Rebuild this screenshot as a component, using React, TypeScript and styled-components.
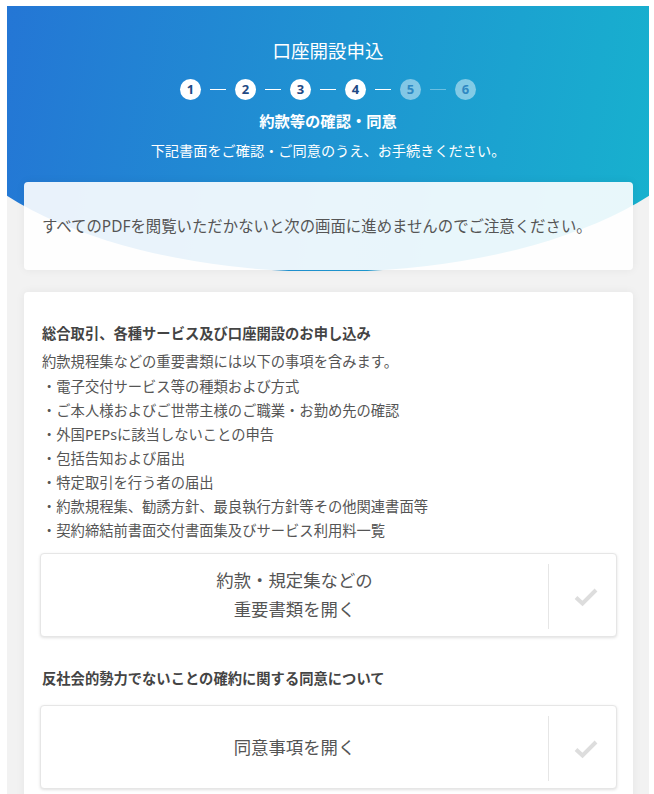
import React from 'react';
import styled, { createGlobalStyle } from 'styled-components';

const GlobalStyle = createGlobalStyle`
  html, body {
    margin: 0;
    padding: 0;
    background: #ffffff;
  }
  body {
    font-family: 'Noto Sans', 'Noto Sans CJK JP', sans-serif;
    -webkit-font-smoothing: antialiased;
  }
`;

const Page = styled.div`
  margin: 6px 0 0 7px;
  width: 642px;
  min-height: 788px;
  background: #f2f2f2;
  overflow: hidden;
`;

const Hero = styled.header`
  padding: 32px 0 110px;
  background: linear-gradient(100deg, #2476d5 0%, #1f94d2 50%, #17b2ce 100%);
  clip-path: ellipse(400px 189px at 50% 77px);
  color: #ffffff;
  text-align: center;
`;

const Title = styled.h1`
  margin: 0;
  font-size: 18.5px;
  line-height: 26px;
  font-weight: 400;
`;

const Steps = styled.ol`
  display: flex;
  justify-content: center;
  align-items: center;
  margin: 15px 0 0;
  padding: 0;
  list-style: none;
`;

const Step = styled.li<{ $done: boolean }>`
  display: flex;
  align-items: center;
  justify-content: center;
  width: 21px;
  height: 21px;
  border-radius: 50%;
  background: ${(p) => (p.$done ? '#ffffff' : 'rgba(255, 255, 255, 0.45)')};
  color: ${(p) => (p.$done ? '#1f4a85' : '#2f88c2')};
  font-size: 13px;
  font-weight: 700;
  line-height: 1;
`;

const Connector = styled.li<{ $faint: boolean }>`
  width: 16px;
  height: 1.5px;
  margin: 0 9px;
  background: ${(p) => (p.$faint ? 'rgba(255, 255, 255, 0.35)' : '#ffffff')};
`;

const StepName = styled.h2`
  margin: 10px 0 0;
  font-size: 15.3px;
  line-height: 22px;
  font-weight: 700;
`;

const Lead = styled.p`
  margin: 9px 0 0;
  font-size: 14.2px;
  line-height: 20px;
`;

const Body = styled.main`
  padding: 0 16px 0 17px;
`;

const Notice = styled.div`
  position: relative;
  z-index: 1;
  display: flex;
  align-items: center;
  height: 88px;
  margin-top: -89px;
  padding: 2px 18px 0;
  box-sizing: border-box;
  background: rgba(255, 255, 255, 0.9);
  border-radius: 4px;
  box-shadow: 0 0 10px rgba(0, 0, 0, 0.06);
  color: #555555;
  font-size: 15.4px;
  line-height: 22px;
`;

const Card = styled.section`
  margin-top: 22px;
  padding: 32px 16px 20px;
  background: #ffffff;
  border-radius: 4px;
  box-shadow: 0 0 10px rgba(0, 0, 0, 0.06);
`;

const Heading = styled.h3<{ $gap?: number }>`
  margin: ${(p) => p.$gap ?? 0}px 0 0;
  padding: 0 2px;
  color: #444444;
  font-size: 14.3px;
  line-height: 20px;
  font-weight: 700;
`;

const Text = styled.p`
  margin: 6px 0 0;
  padding: 0 2px;
  color: #555555;
  font-size: 14.3px;
  line-height: 24px;
`;

const List = styled.ul`
  margin: 1px 0 0;
  padding: 0 2px;
  list-style: none;
  color: #555555;
  font-size: 14.3px;
  line-height: 24px;
`;

const OpenButton = styled.button<{ $gap: number }>`
  display: flex;
  width: 100%;
  height: 84px;
  margin-top: ${(p) => p.$gap}px;
  padding: 0;
  background: #ffffff;
  border: 1px solid #e6e6e6;
  border-radius: 4px;
  box-shadow: 0 1px 3px rgba(0, 0, 0, 0.12);
  font-family: inherit;
  cursor: pointer;
`;

const Label = styled.span`
  flex: 1;
  align-self: center;
  color: #555555;
  font-size: 17.4px;
  line-height: 29px;
  text-align: center;
`;

const CheckArea = styled.span`
  display: flex;
  align-items: center;
  justify-content: center;
  width: 68px;
  margin: 10px 0 7px;
  padding-left: 6px;
  border-left: 1px solid #e6e6e6;
  box-sizing: border-box;
`;

const CheckIcon = () => (
  <svg width="24" height="20" viewBox="0 0 24 20" aria-hidden="true">
    <polyline points="2,10.5 8.5,16.5 22,3" fill="none" stroke="#dddddd" strokeWidth="4" strokeLinejoin="miter" />
  </svg>
);

const steps = [1, 2, 3, 4, 5, 6];
const current = 4;

const items = [
  '電子交付サービス等の種類および方式',
  'ご本人様およびご世帯主様のご職業・お勤め先の確認',
  '外国PEPsに該当しないことの申告',
  '包括告知および届出',
  '特定取引を行う者の届出',
  '約款規程集、勧誘方針、最良執行方針等その他関連書面等',
  '契約締結前書面交付書面集及びサービス利用料一覧',
];

const App: React.FC = () => (
  <>
    <GlobalStyle />
    <Page>
      <Hero>
        <Title>口座開設申込</Title>
        <Steps>
          {steps.map((n) => (
            <React.Fragment key={n}>
              {n > 1 && <Connector $faint={n > current + 1} />}
              <Step $done={n <= current}>{n}</Step>
            </React.Fragment>
          ))}
        </Steps>
        <StepName>約款等の確認・同意</StepName>
        <Lead>下記書面をご確認・ご同意のうえ、お手続きください。</Lead>
      </Hero>
      <Body>
        <Notice>すべてのPDFを閲覧いただかないと次の画面に進めませんのでご注意ください。</Notice>
        <Card>
          <Heading>総合取引、各種サービス及び口座開設のお申し込み</Heading>
          <Text>約款規程集などの重要書類には以下の事項を含みます。</Text>
          <List>
            {items.map((item) => (
              <li key={item}>・{item}</li>
            ))}
          </List>
          <OpenButton $gap={10}>
            <Label>
              約款・規定集などの
              <br />
              重要書類を開く
            </Label>
            <CheckArea>
              <CheckIcon />
            </CheckArea>
          </OpenButton>
          <Heading $gap={32}>反社会的勢力でないことの確約に関する同意について</Heading>
          <OpenButton $gap={16}>
            <Label>同意事項を開く</Label>
            <CheckArea>
              <CheckIcon />
            </CheckArea>
          </OpenButton>
        </Card>
      </Body>
    </Page>
  </>
);

export default App;
